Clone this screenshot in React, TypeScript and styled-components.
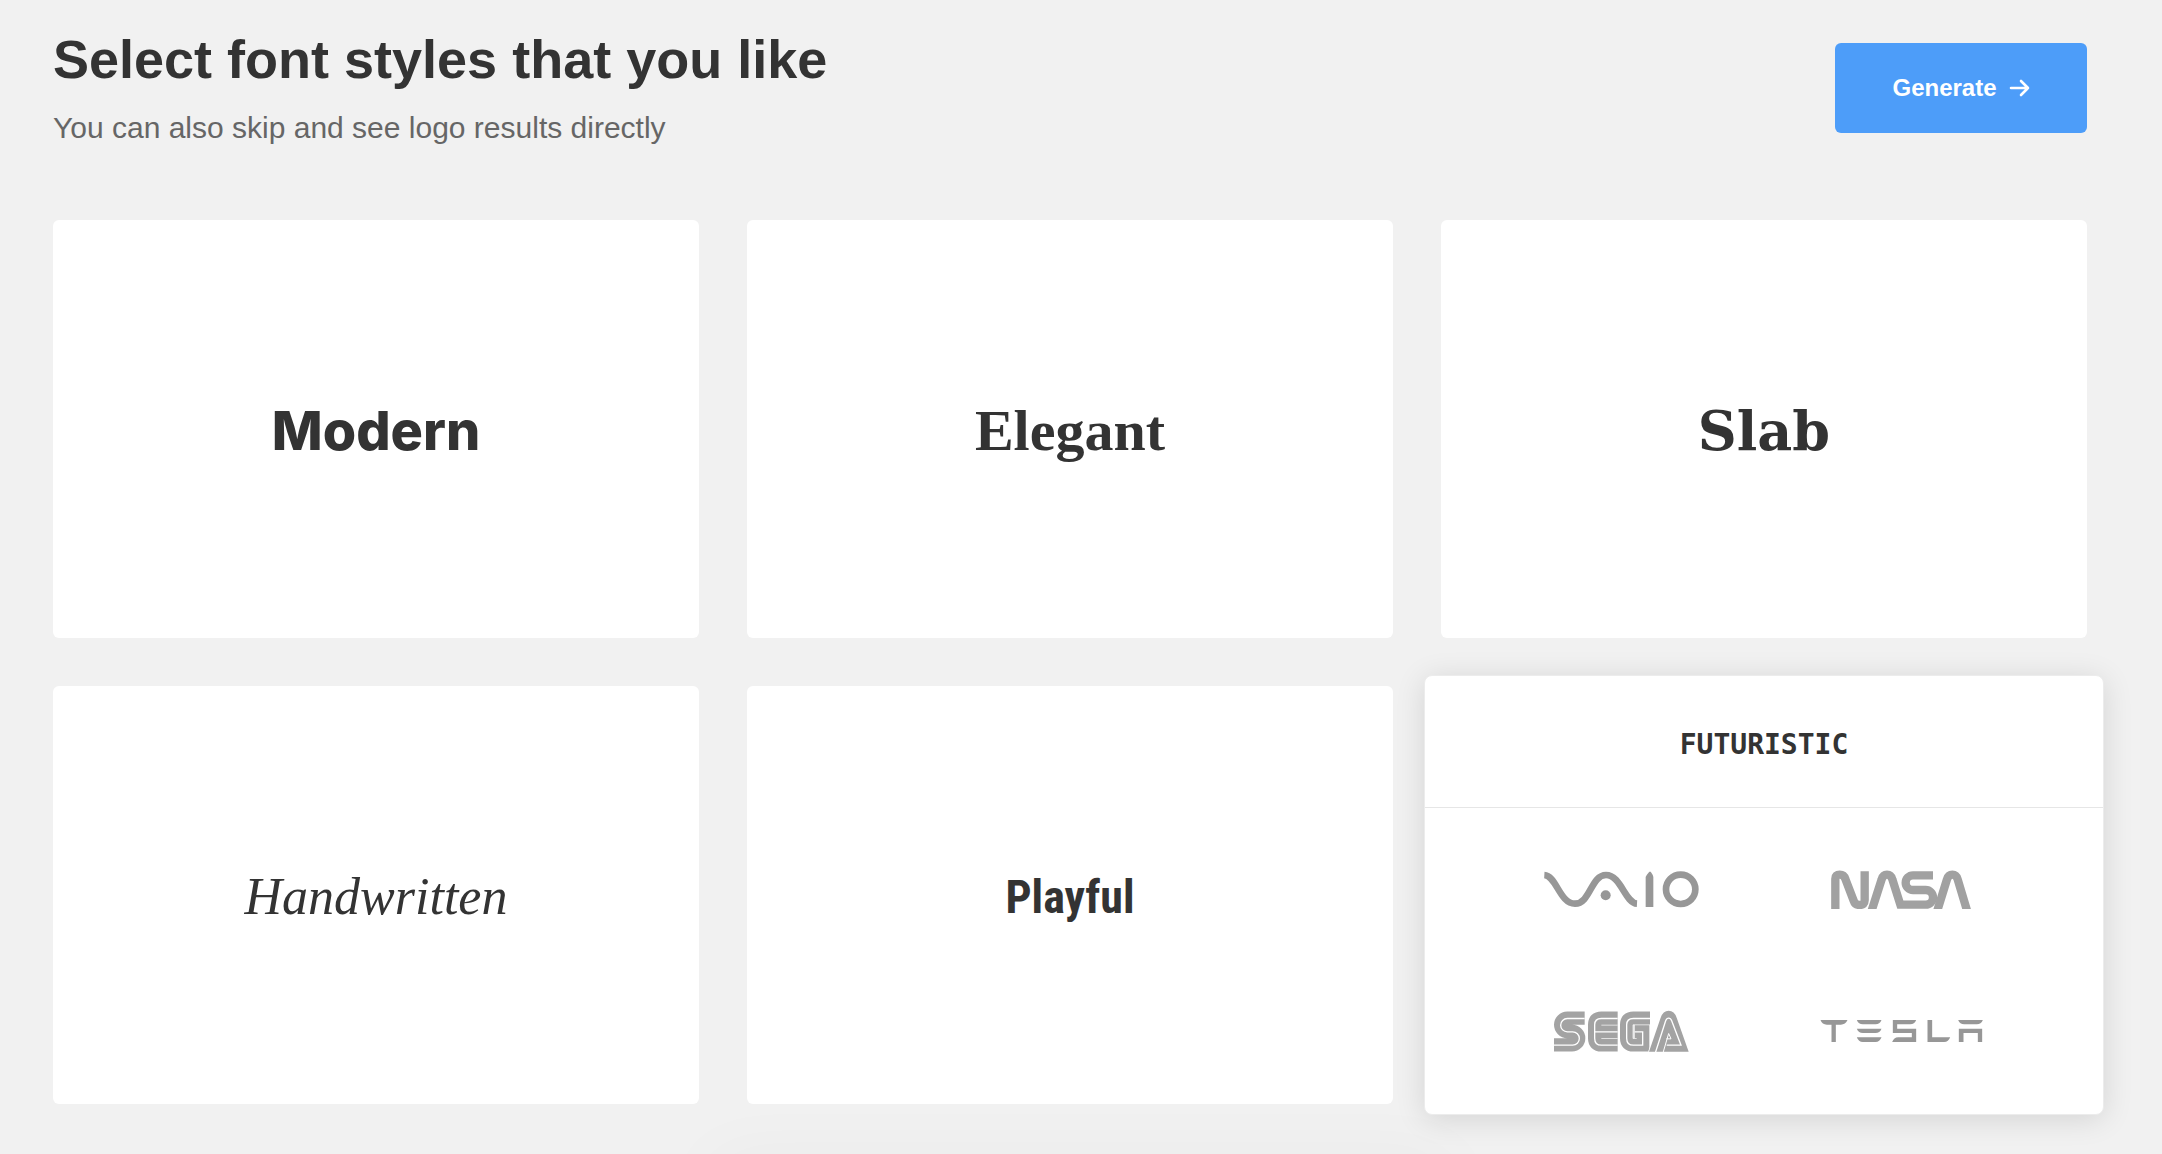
import React, { useState } from "react";
import styled, { createGlobalStyle } from "styled-components";

const GlobalStyle = createGlobalStyle`
  *, *::before, *::after { box-sizing: border-box; }
  body {
    margin: 0;
    background: #f1f1f1;
    color: #333;
    font-family: "Liberation Sans", Arial, Helvetica, sans-serif;
  }
  button { font: inherit; color: inherit; cursor: pointer; }
`;

const Page = styled.main`
  min-height: 100vh;
  padding: 28px 75px 50px 53px;
`;

const Header = styled.header`
  display: flex;
  align-items: center;
  justify-content: space-between;
  gap: 48px;
  margin-bottom: 72px;
`;

const Heading = styled.div`
  display: flex;
  flex-direction: column;
  gap: 18px;
`;

const Title = styled.h1`
  margin: 0;
  font-size: 54px;
  line-height: 62px;
  font-weight: 700;
`;

const Subtitle = styled.p`
  margin: 0;
  font-size: 30px;
  line-height: 40px;
  color: #666;
`;

const GenerateButton = styled.button`
  display: flex;
  align-items: center;
  justify-content: center;
  gap: 12px;
  flex: none;
  min-width: 252px;
  padding: 31px 56px;
  border: 0;
  border-radius: 6px;
  background: #4d9df9;
  color: #fff;
  font-size: 24px;
  line-height: 28px;
  font-weight: 700;
`;

const Grid = styled.section`
  display: grid;
  grid-template-columns: repeat(3, minmax(0, 1fr));
  gap: 48px;
`;

const Card = styled.button`
  display: flex;
  align-items: center;
  justify-content: center;
  aspect-ratio: 646 / 418;
  padding: 3px 0 0;
  border: 0;
  border-radius: 6px;
  background: #fff;
`;

const Cell = styled.div`
  display: flex;
`;

const RaisedCard = styled.button`
  flex: 1;
  display: flex;
  flex-direction: column;
  margin: -11px -17px;
  padding: 0;
  border: 1px solid #ececec;
  border-radius: 8px;
  background: #fff;
  box-shadow: 0 4px 30px rgba(0, 0, 0, 0.12);
`;

const RaisedHead = styled.span`
  display: flex;
  align-items: center;
  justify-content: center;
  width: 100%;
  height: 132px;
  padding-top: 6px;
  border-bottom: 1px solid #e6e6e6;
`;

const LogoGrid = styled.span`
  flex: 1;
  display: grid;
  grid-template-columns: 1fr 1fr;
  grid-template-rows: 1fr 1fr;
  place-items: center;
  width: 100%;
  padding: 10px 62px 12px 56px;
`;

const Sample = styled.span<{ $family: string; $size: number; $weight?: number; $italic?: boolean }>`
  font-family: ${(p) => p.$family};
  font-size: ${(p) => p.$size}px;
  line-height: 64px;
  font-weight: ${(p) => p.$weight ?? 700};
  font-style: ${(p) => (p.$italic ? "italic" : "normal")};
`;

const BottomGlow = styled.div`
  position: fixed;
  top: 100%;
  left: 50%;
  width: 740px;
  height: 90px;
  margin-left: -370px;
  border-radius: 8px;
  box-shadow: 0 0 70px rgba(0, 0, 0, 0.03);
`;

const ArrowIcon = () => (
  <svg width="21" height="18" viewBox="0 0 21 18" fill="none" stroke="#fff" strokeWidth="2.6" strokeLinecap="round" strokeLinejoin="round" aria-hidden="true">
    <path d="M2 9H19M12 2L19 9L12 16" />
  </svg>
);

const VaioLogo = () => (
  <svg width="155" height="37" viewBox="75 64 465 111" role="img" aria-label="Vaio">
    <g fill="none" stroke="#979797" strokeWidth="20">
      <path d="M76 76C112 78 122 162 168 162S216 76 261 76S318 160 354 162" />
      <circle cx="485" cy="119" r="44" />
    </g>
    <circle cx="260" cy="137" r="15" fill="#979797" />
    <path d="M380 172V82Q383 75 391 66H395Q402 75 403 82V172Z" fill="#979797" />
  </svg>
);

const NasaLogo = () => (
  <svg width="140" height="39" viewBox="96 62 420 117" role="img" aria-label="Nasa">
    <g fill="none" stroke="#a1a1a1" strokeWidth="25">
      <path d="M109 180V88Q109 76 122 76Q135 76 139 89L164 154Q168 167 182 167Q197 167 197 153V66" />
      <path d="M216 190L248 90Q252 76 264 76Q276 76 280 90L304 166H380A22 22 0 0 0 380 122H342A22 22 0 0 1 342 78H402" />
      <path d="M413 190L444 90Q448 76 460 76Q472 76 476 90L506 190" />
    </g>
  </svg>
);

const SegaLogo = () => (
  <svg width="135" height="42" viewBox="76 62 405 125" role="img" aria-label="Sega">
    <g fill="none" stroke="#a3a3a3" strokeWidth="40">
      <path d="M168 86H116A20 20 0 0 0 116 126H130A20 20 0 0 1 130 166H76" />
      <path d="M267 86H218Q198 86 198 106V146Q198 166 218 166H267M198 126H267" />
      <path d="M364 86H314Q294 86 294 106V146Q294 166 314 166H342V126H318" />
    </g>
    <g fill="none" stroke="#fff" strokeWidth="4">
      <path d="M168 87H116A19 19 0 0 0 116 127H132A19 19 0 0 1 132 167H76" />
      <path d="M267 87H218Q198 87 198 106V146Q198 167 218 167H267M198 127H267" />
      <path d="M364 87H314Q294 87 294 106V146Q294 167 314 167H342V127H318" />
      <path d="M218 107H267M218 147H267M313 106H364M313 106V147H324" strokeWidth="2" />
    </g>
    <path d="M358 187L397 84Q405 62 420 62Q436 62 443 84L481 187Z" fill="#fff" />
    <path d="M361 187L396 85Q403 64 420 64Q437 64 444 85L480 187Z" fill="#a3a3a3" />
    <path d="M380 190L411 94Q414 86 420 86Q426 86 429 94L457 167H414" fill="none" stroke="#fff" strokeWidth="4" />
    <path d="M403 190L420 132L427 148H413" fill="none" stroke="#fff" strokeWidth="3" />
  </svg>
);

const TeslaLogo = () => (
  <svg width="163" height="22" viewBox="60 90 488 66" fill="#979797" role="img" aria-label="Tesla">
    <path d="M61 90H142Q136 104 122 104H107V156H94V104H80Q66 104 61 90Z" />
    <path d="M170 90H244Q239 103 226 103H188Q175 103 170 90ZM170 116H244Q239 129 226 129H188Q175 129 170 116ZM170 142H244Q239 156 226 156H188Q175 156 170 142Z" />
    <path d="M278 90H348Q343 103 330 103H291V116H348V156H276Q281 142 294 142H335V129H278Z" />
    <path d="M382 90H396V142H450Q445 156 432 156H382Z" />
    <path d="M474 90H548Q543 103 530 103H492Q479 103 474 90ZM476 116H546V156H533V129H490V156H476Z" />
  </svg>
);

const styles = [
  { name: "Modern", family: 'Inter, "Liberation Sans", sans-serif', size: 54, weight: 800 },
  { name: "Elegant", family: '"Liberation Serif", serif', size: 58 },
  { name: "Slab", family: '"DejaVu Serif", serif', size: 54 },
  { name: "Handwritten", family: '"Liberation Serif", serif', size: 52, weight: 400, italic: true },
  { name: "Playful", family: '"Roboto Condensed", "Liberation Sans Narrow", "DejaVu Sans Condensed", sans-serif', size: 46 },
];

export default function App() {
  const [selected, setSelected] = useState<string[]>([]);
  const toggle = (name: string) =>
    setSelected((s) => (s.includes(name) ? s.filter((n) => n !== name) : [...s, name]));

  return (
    <>
      <GlobalStyle />
      <Page>
        <Header>
          <Heading>
            <Title>Select font styles that you like</Title>
            <Subtitle>You can also skip and see logo results directly</Subtitle>
          </Heading>
          <GenerateButton type="button">
            Generate
            <ArrowIcon />
          </GenerateButton>
        </Header>
        <Grid>
          {styles.map((s) => (
            <Card key={s.name} type="button" aria-pressed={selected.includes(s.name)} onClick={() => toggle(s.name)}>
              <Sample $family={s.family} $size={s.size} $weight={s.weight} $italic={s.italic}>
                {s.name}
              </Sample>
            </Card>
          ))}
          <Cell>
            <RaisedCard type="button" aria-pressed={selected.includes("Futuristic")} onClick={() => toggle("Futuristic")}>
              <RaisedHead>
                <Sample $family={'"DejaVu Sans Mono", monospace'} $size={28}>
                  FUTURISTIC
                </Sample>
              </RaisedHead>
              <LogoGrid>
                <VaioLogo />
                <NasaLogo />
                <SegaLogo />
                <TeslaLogo />
              </LogoGrid>
            </RaisedCard>
          </Cell>
        </Grid>
      </Page>
      <BottomGlow />
    </>
  );
}
